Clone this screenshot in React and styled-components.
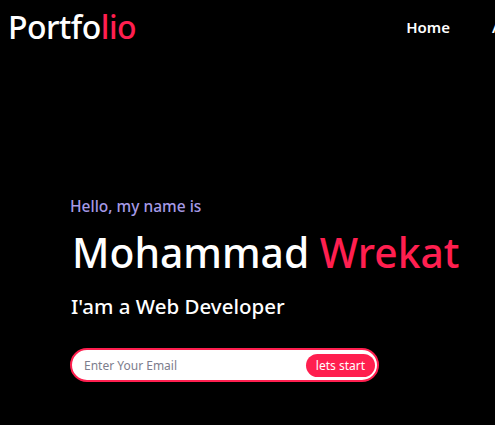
import React from "react";
import styled, { createGlobalStyle } from "styled-components";

const colors = {
  bg: "#000000",
  white: "#ffffff",
  pink: "#ff1f4f",
  lavender: "#a69ae6",
  placeholder: "#7d7d8c",
};

const GlobalStyle = createGlobalStyle`
  html, body {
    margin: 0;
    padding: 0;
    background: ${colors.bg};
    overflow: hidden;
  }
  body {
    font-family: "Noto Sans", "Open Sans", sans-serif;
    color: ${colors.white};
  }
  * { box-sizing: border-box; }
`;

const Page = styled.div`
  width: 495px;
  height: 425px;
  background: ${colors.bg};
  overflow: hidden;
`;

const Header = styled.header`
  display: flex;
  align-items: center;
  gap: 270px;
  padding: 4px 0 0 8px;
  height: 48px;
`;

const Logo = styled.h1`
  margin: 0;
  font-size: 32px;
  font-weight: 500;
  letter-spacing: -0.5px;
  white-space: nowrap;
  flex-shrink: 0;

  span {
    color: ${colors.pink};
  }
`;

const Nav = styled.nav`
  display: flex;
  gap: 42px;
  flex-shrink: 0;
`;

const NavLink = styled.a`
  color: ${colors.white};
  font-size: 15px;
  font-weight: 600;
  text-decoration: none;
  white-space: nowrap;
  margin-top: 2px;
`;

const Hero = styled.section`
  display: flex;
  flex-direction: column;
  padding: 147px 0 0 70px;
`;

const Greeting = styled.p`
  margin: 0;
  font-size: 15.5px;
  font-weight: 500;
  color: ${colors.lavender};
`;

const Name = styled.h2`
  margin: 8px 0 0 2px;
  font-size: 40.8px;
  font-weight: 500;
  line-height: 54px;
  white-space: nowrap;

  span {
    color: ${colors.pink};
  }
`;

const Role = styled.h3`
  margin: 12px 0 0 1px;
  font-size: 20.5px;
  font-weight: 500;
  line-height: 30px;
`;

const Form = styled.form`
  display: flex;
  align-items: center;
  justify-content: space-between;
  width: 309px;
  height: 34px;
  margin-top: 27px;
  padding: 0 2px 0 10px;
  background: ${colors.white};
  border: 2px solid ${colors.pink};
  border-radius: 17px;
`;

const EmailInput = styled.input`
  flex: 1;
  min-width: 0;
  border: none;
  outline: none;
  background: transparent;
  font-family: inherit;
  font-size: 12px;
  color: #333;

  &::placeholder {
    color: ${colors.placeholder};
  }
`;

const StartButton = styled.button`
  height: 23px;
  padding: 0 10px;
  border: none;
  border-radius: 12px;
  background: ${colors.pink};
  color: ${colors.white};
  font-family: inherit;
  font-size: 12px;
  cursor: pointer;
`;

export default function App() {
  return (
    <Page>
      <GlobalStyle />
      <Header>
        <Logo>
          Portfo<span>lio</span>
        </Logo>
        <Nav>
          <NavLink href="#home">Home</NavLink>
          <NavLink href="#about">About</NavLink>
          <NavLink href="#skills">Skills</NavLink>
          <NavLink href="#projects">Projects</NavLink>
        </Nav>
      </Header>
      <Hero>
        <Greeting>Hello, my name is</Greeting>
        <Name>
          Mohammad <span>Wrekat</span>
        </Name>
        <Role>I'am a Web Developer</Role>
        <Form onSubmit={(e) => e.preventDefault()}>
          <EmailInput type="email" placeholder="Enter Your Email" />
          <StartButton type="submit">lets start</StartButton>
        </Form>
      </Hero>
    </Page>
  );
}
